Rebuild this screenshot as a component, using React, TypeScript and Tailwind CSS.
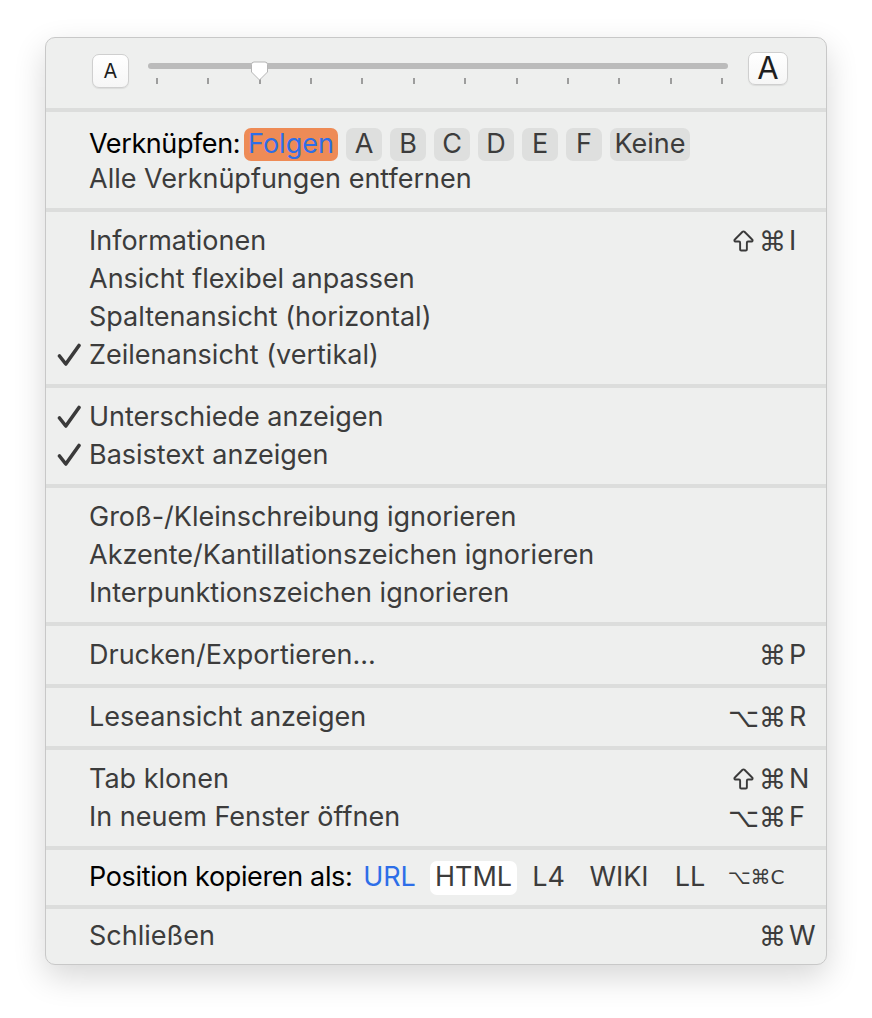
import React from "react";
import { ArrowBigUp } from "lucide-react";

const FONT = { fontFamily: "Inter, 'Liberation Sans', sans-serif" };
const SYM = { fontFamily: "'DejaVu Sans', sans-serif" };

function Check() {
  return (
    <svg
      className="absolute left-[11px] top-[7px]"
      width="25"
      height="24"
      viewBox="0 0 25 24"
    >
      <path
        d="M2.5 13 L8.8 21 L22 2.5"
        fill="none"
        stroke="#3a3a3a"
        strokeWidth="3.6"
        strokeLinecap="round"
        strokeLinejoin="round"
      />
    </svg>
  );
}

function Mod({ m }: { m: string }) {
  if (m === "⇧")
    return (
      <ArrowBigUp
        size={27}
        strokeWidth={1.7}
        className="mr-[2px] text-[#3a3a3a]"
        aria-label="⇧"
      />
    );
  return (
    <span className="text-[27px] leading-none" style={SYM}>
      {m}
    </span>
  );
}

function Shortcut({ mods, k }: { mods: string; k: string }) {
  return (
    <span className="flex items-center">
      <span className="flex items-center pr-[3px]">
        {Array.from(mods).map((m, i) => (
          <Mod key={i} m={m} />
        ))}
      </span>
      <span className="w-[32px]">{k}</span>
    </span>
  );
}

function Row({
  label,
  check,
  mods,
  k,
}: {
  label: string;
  check?: boolean;
  mods?: string;
  k?: string;
}) {
  return (
    <div className="relative flex h-[38px] items-center pl-[43px] pr-[5px]">
      {check && <Check />}
      <span className="flex-1 whitespace-nowrap">{label}</span>
      {k && <Shortcut mods={mods || ""} k={k} />}
    </div>
  );
}

function Sep() {
  return <div className="h-[4px] bg-[#dcdddc]" />;
}

function Thumb() {
  return (
    <svg
      className="absolute left-[102px] top-[-2px]"
      width="19"
      height="20"
      viewBox="0 0 19 20"
    >
      <path
        d="M1.5 3.5 Q1.5 1 4 1 H15 Q17.5 1 17.5 3.5 V11 L9.5 19 L1.5 11 Z"
        fill="#ffffff"
        stroke="#b5b5b5"
        strokeWidth="1"
      />
    </svg>
  );
}

export default function App() {
  const ticks = Array.from({ length: 12 });
  const letters = ["A", "B", "C", "D", "E", "F"];
  return (
    <div className="min-h-[1018px] w-[872px] bg-white pt-[37px]" style={FONT}>
      <div className="ml-[45px] w-[782px] overflow-hidden rounded-[10px] border border-[#c8c8c8] bg-[#eeefee] text-[27px] text-[#3c3c3c] shadow-[0_12px_32px_rgba(0,0,0,0.16)]">
        {/* slider */}
        <div className="flex h-[70px] items-start pl-[46px] pt-[16px]">
          <div className="flex h-[34px] w-[37px] items-center justify-center rounded-[7px] border border-[#cfcfcf] bg-gradient-to-b from-white to-[#f6f6f6] text-[20px] text-[#1e1e1e] shadow-[0_1px_1px_rgba(0,0,0,0.08)]">
            A
          </div>
          <div className="relative ml-[19px] mt-[9px] w-[580px]">
            <div className="h-[6px] rounded-full bg-[#bbbbbb]" />
            <div className="mt-[9px] flex justify-between pl-[8px] pr-[5px]">
              {ticks.map((_, i) => (
                <div key={i} className="h-[6px] w-[2px] bg-[#9d9d9d]" />
              ))}
            </div>
            <Thumb />
          </div>
          <div className="ml-[20px] mt-[-2px] flex h-[33px] w-[40px] items-center justify-center rounded-[7px] border border-[#cfcfcf] bg-gradient-to-b from-white to-[#f6f6f6] text-[31px] text-[#1e1e1e] shadow-[0_1px_1px_rgba(0,0,0,0.08)]">
            A
          </div>
        </div>
        <Sep />
        {/* Verknüpfen */}
        <div className="pb-[12px] pt-[14px]">
          <div className="flex h-[36px] items-center pl-[43px]">
            <span className="w-[155px] whitespace-nowrap tracking-[-0.4px] text-black">Verknüpfen:</span>
            <span className="flex h-[33px] w-[94px] items-center justify-center rounded-[7px] bg-[#ee8b56] text-[#2d6ee8]">
              Folgen
            </span>
            {letters.map((l) => (
              <span
                key={l}
                className="ml-[8px] flex h-[33px] w-[36px] items-center justify-center rounded-[7px] bg-[#dedfde]"
              >
                {l}
              </span>
            ))}
            <span className="ml-[8px] flex h-[33px] w-[80px] items-center justify-center rounded-[7px] bg-[#dedfde]">
              Keine
            </span>
          </div>
          <div className="flex h-[34px] items-center pl-[43px]">Alle Verknüpfungen entfernen</div>
        </div>
        <Sep />
        <div className="py-[10px]">
          <Row label="Informationen" mods="⇧⌘" k="I" />
          <Row label="Ansicht flexibel anpassen" />
          <Row label="Spaltenansicht (horizontal)" />
          <Row label="Zeilenansicht (vertikal)" check />
        </div>
        <Sep />
        <div className="py-[10px]">
          <Row label="Unterschiede anzeigen" check />
          <Row label="Basistext anzeigen" check />
        </div>
        <Sep />
        <div className="py-[10px]">
          <Row label="Groß-/Kleinschreibung ignorieren" />
          <Row label="Akzente/Kantillationszeichen ignorieren" />
          <Row label="Interpunktionszeichen ignorieren" />
        </div>
        <Sep />
        <div className="py-[10px]">
          <Row label="Drucken/Exportieren..." mods="⌘" k="P" />
        </div>
        <Sep />
        <div className="py-[10px]">
          <Row label="Leseansicht anzeigen" mods="⌥⌘" k="R" />
        </div>
        <Sep />
        <div className="py-[10px]">
          <Row label="Tab klonen" mods="⇧⌘" k="N" />
          <Row label="In neuem Fenster öffnen" mods="⌥⌘" k="F" />
        </div>
        <Sep />
        <div className="flex h-[55px] items-center pl-[43px]">
          <span className="w-[263px] whitespace-nowrap tracking-[-0.35px] text-black">Position kopieren als:</span>
          <span className="flex h-[34px] w-[75px] items-center justify-center text-[#2d6ee8]">URL</span>
          <span className="ml-[3px] flex h-[34px] w-[87px] items-center justify-center rounded-[7px] bg-white">
            HTML
          </span>
          <span className="flex h-[34px] w-[63px] items-center justify-center">L4</span>
          <span className="flex h-[34px] w-[78px] items-center justify-center">WIKI</span>
          <span className="flex h-[34px] w-[64px] items-center justify-center">LL</span>
          <span className="flex h-[34px] w-[68px] items-start justify-center pt-[1px] text-[20px]" style={SYM}>
            ⌥⌘C
          </span>
        </div>
        <Sep />
        <div className="pb-[9px] pt-[8px]">
          <Row label="Schließen" mods="⌘" k="W" />
        </div>
      </div>
    </div>
  );
}
